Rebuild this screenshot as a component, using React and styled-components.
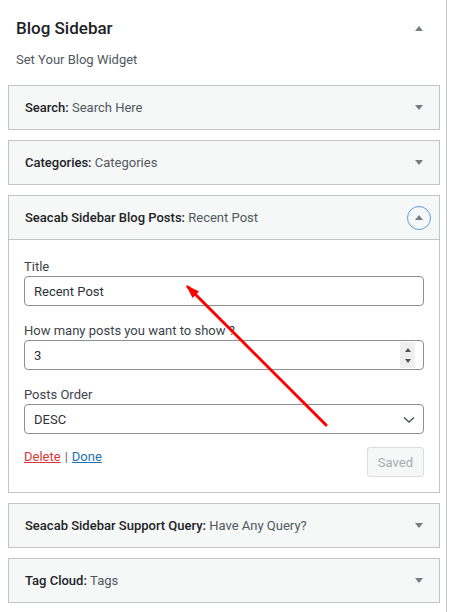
import React, { useState } from "react";
import styled, { createGlobalStyle } from "styled-components";

const GlobalStyle = createGlobalStyle`
  body {
    margin: 0;
    background: #fff;
    font-family: Roboto, "Liberation Sans", sans-serif;
    font-size: 13px;
    color: #3c434a;
  }
  * { box-sizing: border-box; }
`;

const widgets = [
    { id: "search", name: "Search", title: "Search Here" },
    { id: "categories", name: "Categories", title: "Categories" },
    { id: "posts", name: "Seacab Sidebar Blog Posts", title: "Recent Post", open: true },
    { id: "query", name: "Seacab Sidebar Support Query", title: "Have Any Query?" },
    { id: "tags", name: "Tag Cloud", title: "Tags" },
];

function Widget({ name, title, open }) {
    return (
        <WidgetBox>
            <WidgetHeader $open={open}>
                <WidgetTitle>
                    {name}: <WidgetSub>{title}</WidgetSub>
                </WidgetTitle>
                <Toggle $open={open}>
                    <Caret $up={open} />
                </Toggle>
            </WidgetHeader>
            {open && <PostsForm />}
        </WidgetBox>
    );
}

function PostsForm() {
    const [title, setTitle] = useState("Recent Post");
    const [count, setCount] = useState("3");
    const [order, setOrder] = useState("DESC");

    return (
        <WidgetBody>
            <Field>
                <Label htmlFor="post-title">Title</Label>
                <Input id="post-title" type="text" value={title} onChange={({ target: { value } }) => setTitle(value)} />
            </Field>
            <Field>
                <Label htmlFor="post-count">How many posts you want to show ?</Label>
                <NumberBox>
                    <NumberInput id="post-count" type="number" value={count} onChange={({ target: { value } }) => setCount(value)} />
                    <Spinner>
                        <Caret $up $small $dark />
                        <Caret $small $dark />
                    </Spinner>
                </NumberBox>
            </Field>
            <Field>
                <Label htmlFor="post-order">Posts Order</Label>
                <SelectWrap>
                    <Select id="post-order" value={order} onChange={({ target: { value } }) => setOrder(value)}>
                        <option value="DESC">DESC</option>
                        <option value="ASC">ASC</option>
                    </Select>
                    <Chevron width="12" height="8" viewBox="0 0 12 8">
                        <path d="M1 1.5 L6 6 L11 1.5" fill="none" stroke="#50575e" strokeWidth="1.6" />
                    </Chevron>
                </SelectWrap>
            </Field>
            <Actions>
                <Links>
                    <ActionLink href="#" $danger>Delete</ActionLink>
                    <Sep>|</Sep>
                    <ActionLink href="#">Done</ActionLink>
                </Links>
                <SaveButton type="button" disabled>Saved</SaveButton>
            </Actions>
        </WidgetBody>
    );
}

export default function App() {
    return (
        <Page>
            <GlobalStyle />
            <Panel>
                <PanelHead>
                    <PanelTitle>Blog Sidebar</PanelTitle>
                    <Caret $up />
                </PanelHead>
                <Description>Set Your Blog Widget</Description>
                {widgets.map((w) => (
                    <Widget key={w.id} {...w} />
                ))}
            </Panel>
            <Pointer width="175" height="170" viewBox="0 0 175 170">
                <line x1="27" y1="23" x2="165" y2="161" stroke="#f00" strokeWidth="3" strokeLinecap="round" />
                <polygon points="25,21 38,27.5 31.5,34" fill="#f00" />
            </Pointer>
        </Page>
    );
}

const Page = styled.div`
    position: relative;
    min-height: 100vh;
`;

const Panel = styled.div`
    width: 447px;
    min-height: 100vh;
    padding: 18px 6px 1px 8px;
    border-right: 1px solid #c3c4c7;
`;

const PanelHead = styled.div`
    display: flex;
    align-items: center;
    justify-content: space-between;
    padding: 0 17px 0 8px;
    height: 20px;
`;

const PanelTitle = styled.h2`
    margin: 0;
    font-size: 17px;
    font-weight: 500;
    line-height: 20px;
    color: #1d2327;
`;

const Description = styled.p`
    margin: 13px 0 16px 8px;
    line-height: 18px;
    color: #50575e;
`;

const WidgetBox = styled.div`
    border: 1px solid #c3c4c7;
    background: #fff;
    margin-bottom: 10px;
`;

const WidgetHeader = styled.div`
    display: flex;
    align-items: center;
    justify-content: space-between;
    height: ${(p) => (p.$open ? "44px" : "43px")};
    padding: 0 8px 0 16px;
    background: #f6f7f7;
    border-bottom: ${(p) => (p.$open ? "1px solid #c3c4c7" : "none")};
`;

const WidgetTitle = styled.h3`
    margin: 0;
    font-size: 13px;
    font-weight: 500;
    color: #1d2327;
`;

const WidgetSub = styled.span`
    font-weight: 400;
    color: #50575e;
`;

const Toggle = styled.span`
    display: flex;
    align-items: center;
    justify-content: center;
    width: 24px;
    height: 24px;
    border-radius: 50%;
    border: 1.5px solid ${(p) => (p.$open ? "#5b9dd9" : "transparent")};
`;

const Caret = styled.span`
    width: 0;
    height: 0;
    border-left: ${(p) => (p.$small ? "3.5px" : "4px")} solid transparent;
    border-right: ${(p) => (p.$small ? "3.5px" : "4px")} solid transparent;
    ${(p) => (p.$up ? "border-bottom" : "border-top")}: ${(p) => (p.$small ? "4px" : "5px")} solid ${(p) => (p.$dark ? "#505050" : "#787c82")};
`;

const WidgetBody = styled.div`
    padding: 17px 15px 15px;
`;

const Field = styled.div`
    display: flex;
    flex-direction: column;
    margin-bottom: 15px;
`;

const Label = styled.label`
    line-height: 19px;
    color: #3c434a;
`;

const Input = styled.input`
    height: 30px;
    width: 100%;
    padding: 0 9px;
    border: 1px solid #8c8f94;
    border-radius: 4px;
    font: inherit;
    font-size: 13px;
    color: #2c3338;
    outline: none;
`;

const NumberBox = styled.div`
    display: flex;
    align-items: center;
    height: 30px;
    padding-right: 8px;
    border: 1px solid #8c8f94;
    border-radius: 4px;
`;

const NumberInput = styled.input`
    flex: 1;
    min-width: 0;
    height: 100%;
    padding: 0 9px;
    border: none;
    background: transparent;
    font: inherit;
    font-size: 13px;
    color: #2c3338;
    outline: none;
    -moz-appearance: textfield;
    &::-webkit-inner-spin-button,
    &::-webkit-outer-spin-button {
        -webkit-appearance: none;
        margin: 0;
    }
`;

const Spinner = styled.div`
    display: flex;
    flex-direction: column;
    align-items: center;
    justify-content: center;
    gap: 7px;
    width: 15px;
    height: 26px;
    background: #efefef;
`;

const SelectWrap = styled.div`
    position: relative;
`;

const Select = styled.select`
    width: 100%;
    height: 30px;
    padding: 0 24px 0 9px;
    border: 1px solid #8c8f94;
    border-radius: 4px;
    background: #fff;
    font: inherit;
    font-size: 13px;
    color: #2c3338;
    appearance: none;
    outline: none;
`;

const Chevron = styled.svg`
    position: absolute;
    right: 9px;
    top: 12px;
    pointer-events: none;
`;

const Actions = styled.div`
    display: flex;
    align-items: flex-start;
    justify-content: space-between;
    margin-top: -2px;
`;

const Links = styled.div`
    line-height: 19px;
`;

const ActionLink = styled.a`
    color: ${(p) => (p.$danger ? "#d63638" : "#2271b1")};
    text-decoration: underline;
`;

const Sep = styled.span`
    margin: 0 4px;
    color: #646970;
`;

const SaveButton = styled.button`
    height: 30px;
    padding: 0 10px;
    border: 1px solid #dcdcde;
    border-radius: 3px;
    background: #f6f7f7;
    color: #a7aaad;
    font: inherit;
    font-size: 13px;
`;

const Pointer = styled.svg`
    position: absolute;
    left: 161px;
    top: 264px;
    pointer-events: none;
`;
